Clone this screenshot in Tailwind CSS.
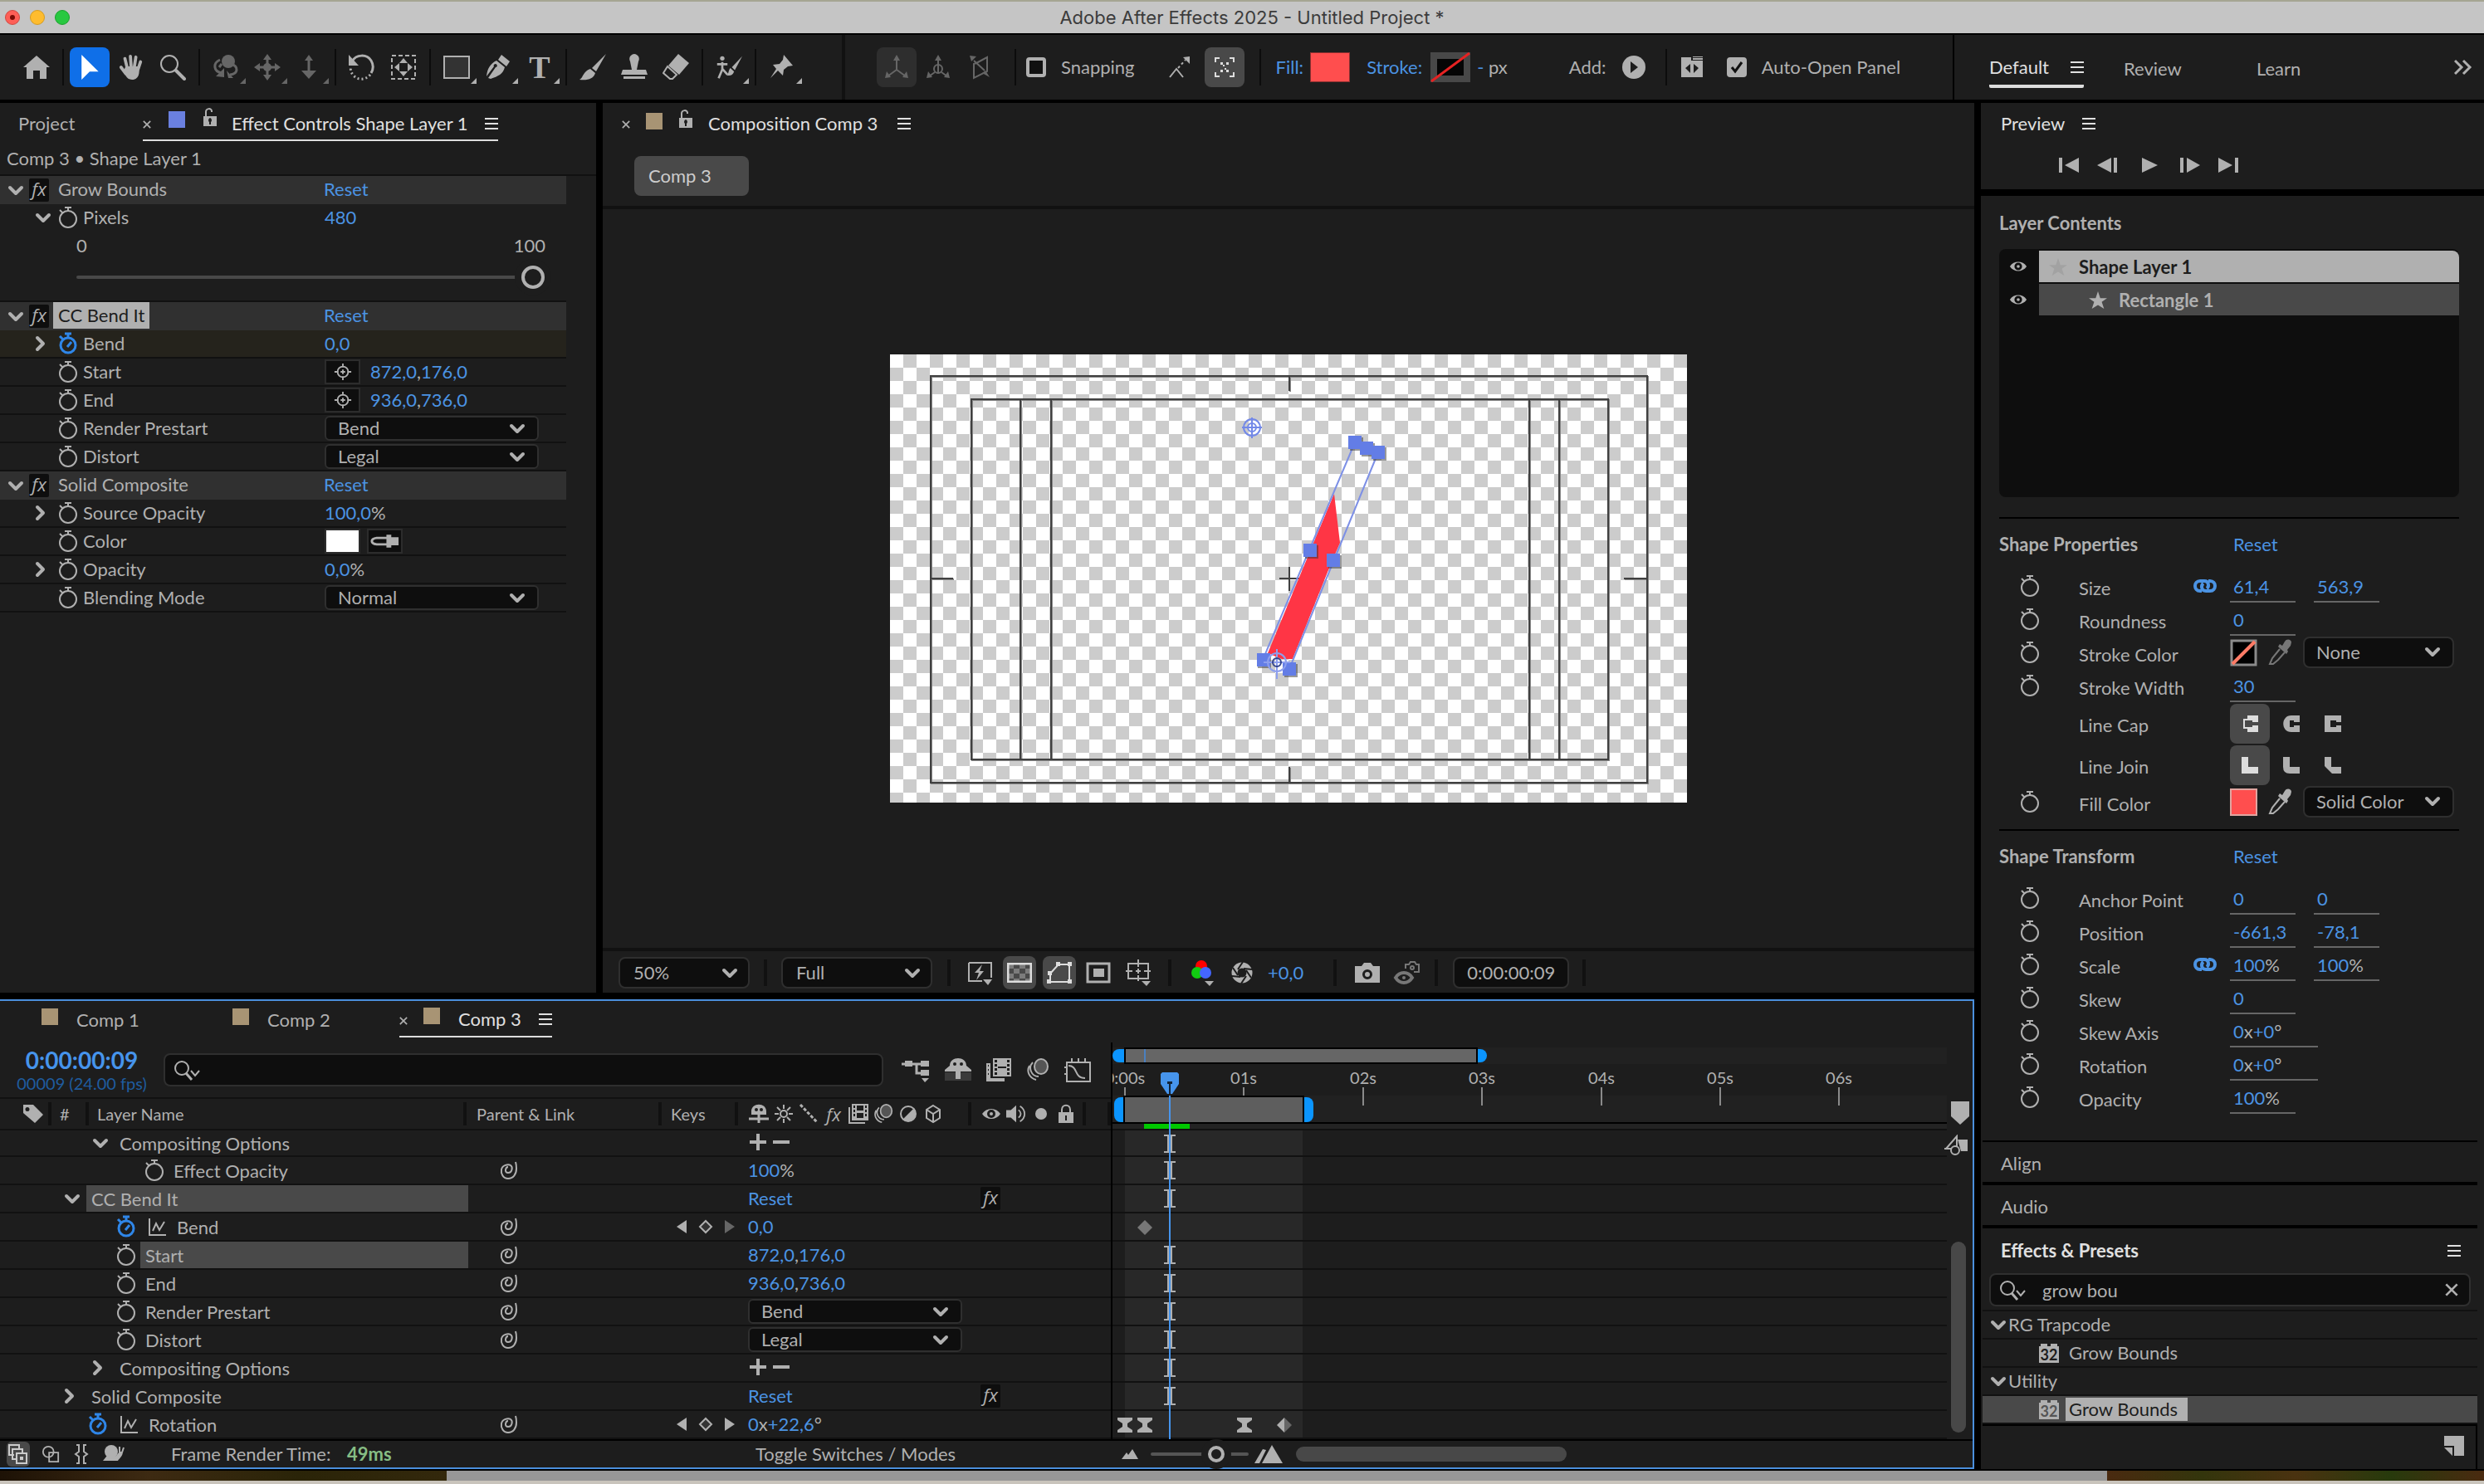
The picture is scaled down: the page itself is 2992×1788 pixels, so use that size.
<!DOCTYPE html>
<html lang="en">

<head>
  <meta charset="UTF-8">
  <meta name="viewport" content="width=device-width, initial-scale=1.0">
  <title>Adobe After Effects 2025 - Untitled Project *</title>
  <script src="https://cdn.jsdelivr.net/npm/@tailwindcss/browser@4"></script>
</head>

<body class="min-h-screen flex flex-col bg-black text-[#b0b0b0] text-[22px] leading-7 font-['Lato','Noto_Sans',sans-serif] [&_use]:stroke-current [&_use]:stroke-2">

  <!-- Icon sprite -->
  <svg class="hidden">
    <symbol id="home" viewBox="0 0 32 32"><path fill="currentColor" stroke="none" d="M16 2 0 16h4v14h8V20h8v10h8V16h4z"/></symbol>
    <symbol id="arrow" viewBox="0 0 32 36"><path fill="currentColor" stroke="none" d="M5 1 28 24H16L5 35z"/></symbol>
    <symbol id="hand" viewBox="0 0 32 34"><path fill="none" stroke-width="4" stroke-linecap="round" d="M11 18 8 6M16 17 15 3M20 17l2-13M25 19l3-9M9 25 3 17"/><path fill="currentColor" stroke="none" d="M9 16h18l-1 9c-1 5-4 8-9 8-4 0-6-2-8-5l-3-6z"/></symbol>
    <symbol id="zoom" viewBox="0 0 32 32"><circle cx="12" cy="12" r="10" fill="none"/><path stroke-width="4" stroke-linecap="round" d="m20 20 10 10"/></symbol>
    <symbol id="orbit" viewBox="0 0 32 32"><circle cx="19" cy="9" r="8" fill="currentColor" stroke="none"/><path fill="none" stroke-width="3" d="M9 7c-9 4-8 14 2 16M22 12c10 3 9 12-1 13M11 12l-3 4"/><path fill="currentColor" stroke="none" d="M14 17v11L4 27zM17 20l8 9h-6z"/></symbol>
    <symbol id="pan" viewBox="0 0 32 32"><circle cx="16" cy="16" r="5" fill="currentColor" stroke="none"/><path stroke-width="3" d="M16 5v22M5 16h22"/><path fill="currentColor" stroke="none" d="m16 0 5 7H11zM16 32l5-7H11zM0 16l7-5v10zM32 16l-7-5v10z"/></symbol>
    <symbol id="dolly" viewBox="0 0 32 32"><path stroke-width="3" d="M16 6v16"/><path fill="currentColor" stroke="none" d="m16 1 5 7H11zM16 30l9-10H7z"/></symbol>
    <symbol id="rotate" viewBox="0 0 32 32"><path fill="none" stroke-width="3" d="M4 9c5-9 18-9 23-1 3 5 3 10 0 15"/><path fill="none" stroke-width="3" stroke-dasharray="2 3" d="M26 25c-6 7-16 7-21 0-3-4-3-7-2-10"/><path fill="currentColor" stroke="none" d="M0 1v13h12z"/></symbol>
    <symbol id="panbehind" viewBox="0 0 32 32"><path fill="none" stroke-dasharray="5 3" d="M2 2h28v28H2z"/><path fill="currentColor" stroke="none" d="m16 5 5 6H11zM16 27l5-6H11zM5 16l6-5v10zM27 16l-6-5v10z"/></symbol>
    <symbol id="rect" viewBox="0 0 32 32"><path fill="#333" d="M1 3h30v26H1z"/></symbol>
    <symbol id="pen" viewBox="0 0 32 32"><path fill="currentColor" stroke="none" d="m20 1 10 8-4 6-10-8zM14 8l10 8c-2 8-8 11-17 14l-3-1 9-13a2 2 0 1 0-2-1L2 27C3 18 6 12 14 8z"/></symbol>
    <symbol id="brush" viewBox="0 0 32 32"><path fill="currentColor" stroke="none" d="M32 0 20 21l-5-4zM13 18l6 5c-2 7-9 9-19 8 5-3 4-10 13-13z"/></symbol>
    <symbol id="stamp" viewBox="0 0 32 32"><path fill="currentColor" stroke="none" d="M16 0a6 6 0 0 1 5 9l-2 10h11l2 6H0l2-6h11L11 9a6 6 0 0 1 5-9zM3 27h26v3H3z"/></symbol>
    <symbol id="eraser" viewBox="0 0 32 32"><path fill="currentColor" stroke="none" d="M19 0 32 11 20 25 7 14z"/><path fill="none" d="m6 15 11 10-5 5H9l-8-7z"/></symbol>
    <symbol id="roto" viewBox="0 0 36 32"><circle cx="9" cy="4" r="3" fill="currentColor" stroke="none"/><path fill="none" stroke-width="3" d="M2 12h14M9 9v10l-5 12M9 18l7 8"/><path fill="currentColor" stroke="none" d="M36 1 26 20l-4-4zM20 17l5 5c-2 5-5 6-10 5 3-2 2-7 5-10z"/></symbol>
    <symbol id="pin" viewBox="0 0 32 32"><path fill="currentColor" stroke="none" d="m18 1 11 13-6 1-5 4-1 7-6-6-9 9 7-11-4-5 8-1 4-5z"/></symbol>
    <symbol id="axis1" viewBox="0 0 32 32"><path fill="none" d="M16 5v14M16 19 5 27M16 19l11 8"/><path fill="currentColor" stroke="none" d="m16 1 4 7h-8zM2 29l2-8 5 7zM30 29l-2-8-5 7z"/></symbol>
    <symbol id="axis2" viewBox="0 0 32 32"><circle cx="16" cy="18" r="5" fill="none"/><path fill="none" d="M16 5v18M12 22l-7 5M20 22l7 5"/><path fill="currentColor" stroke="none" d="m16 1 4 7h-8zM2 29l2-8 5 7zM30 29l-2-8-5 7z"/></symbol>
    <symbol id="axis3" viewBox="0 0 32 32"><path fill="none" d="M9 12v17l16-8V4L12 11zM9 8l13 12"/><path fill="currentColor" stroke="none" d="m4 2 8 1-6 6zM28 28l-9-5 4-3z"/></symbol>
    <symbol id="snap" viewBox="0 0 32 32"><path fill="none" d="m4 28 8-10 8 10"/><path fill="none" stroke-dasharray="3 3" d="m14 17 9-10"/><path fill="currentColor" stroke="none" d="M28 3v9l-8-8z"/></symbol>
    <symbol id="snapbox" viewBox="0 0 32 32"><path fill="none" d="M10 5H5v5M22 5h5v5M10 27H5v-5M22 27h5v-5"/><path fill="currentColor" stroke="none" d="M11 10h3v3h-3zM18 10h3v3h-3zM11 19h3v3h-3zM18 19h3v3h-3zM14 13h2v2h-2zM16 17h2v2h-2z"/></symbol>
    <symbol id="panelopen" viewBox="0 0 28 28"><path fill="currentColor" stroke="none" fill-rule="evenodd" d="M1 2h12v4h14v20H1zM12 10l-6 5 6 6zM16 10v11l6-6zM15 1h12v1H15zM15 3h12v2H15z"/></symbol>
    <symbol id="menu" viewBox="0 0 16 16"><path d="M0 2h16M0 8h16M0 14h16"/></symbol>
    <symbol id="lock" viewBox="0 0 16 24"><path fill="none" d="M3 11V5c0-5 7-5 7-1v1"/><path fill="currentColor" stroke="none" fill-rule="evenodd" d="M0 10h16v12H0zM8 12a3 3 0 0 0-1 5v3h2v-3a3 3 0 0 0-1-5z"/></symbol>
    <symbol id="padlock" viewBox="0 0 18 24"><path fill="none" d="M4 11V7c0-7 10-7 10 0v4"/><path fill="currentColor" stroke="none" fill-rule="evenodd" d="M0 10h18v13H0zM8 14v6h2v-6z"/></symbol>
    <symbol id="down" viewBox="0 0 24 24"><path fill="none" stroke-width="4" stroke-linecap="round" stroke-linejoin="round" d="m5 9 7 7 7-7"/></symbol>
    <symbol id="right" viewBox="0 0 24 24"><path fill="none" stroke-width="4" stroke-linecap="round" stroke-linejoin="round" d="m5 5 7 7-7 7"/></symbol>
    <symbol id="watch" viewBox="0 0 24 28"><circle cx="12" cy="16" r="10" fill="none"/><path d="M12 2v4M8 2h8M2 5l4 4"/></symbol>
    <symbol id="watchon" viewBox="0 0 24 28"><circle cx="12" cy="16" r="9" fill="none" stroke-width="3"/><path stroke-width="3" d="M12 2v4M8 2h8M2 5l4 4M11 18l5-6"/></symbol>
    <symbol id="graph" viewBox="0 0 24 24"><path fill="none" d="M2 2v20h20M6 17 10 8l4 8 6-10"/></symbol>
    <symbol id="whip" viewBox="0 0 24 24"><path fill="none" d="M12 8c-3 0-5 7 0 7s6-7 3-9-10 0-11 5 2 11 8 11 10-5 10-12c0-3 0-5-1-8"/></symbol>
    <symbol id="target" viewBox="0 0 24 24"><circle cx="12" cy="12" r="7" fill="none"/><path d="M12 1v5M12 18v5M1 12h5M18 12h5M12 9v6M9 12h6"/></symbol>
    <symbol id="dropper" viewBox="0 0 28 32"><path fill="currentColor" stroke="none" d="M28 4c0-4-6-5-8-1l-3 5-3-2-2 3 2 2 8 7 2-3-1-2 4-5z"/><path fill="none" d="m14 12-9 11-3 7 4 0 6-5 8-9"/></symbol>
    <symbol id="dropperflat" viewBox="0 0 40 20"><path fill="none" stroke-width="3" d="M24 6H10c-8 1-8 7 0 8h14"/><path fill="currentColor" stroke="none" d="M22 2h6v3h9v10h-9v3h-6z"/></symbol>
    <symbol id="chain" viewBox="0 0 28 18"><path fill="none" stroke-width="4" d="M10 15H8C0 15 0 3 8 3h5c6 0 6 7 3 9M18 3h2c8 0 8 12 0 12h-5c-6 0-6-7-3-9"/></symbol>
    <symbol id="star" viewBox="0 0 24 24"><path fill="currentColor" stroke="none" d="m12 0 3 9h9l-7 5 3 9-8-5-8 5 3-9-7-5h9z"/></symbol>
    <symbol id="eye" viewBox="0 0 24 18"><path fill="currentColor" stroke="none" fill-rule="evenodd" d="M1 9C6 1 18 1 23 9 18 17 6 17 1 9zM12 4a5 5 0 1 0 0 10 5 5 0 0 0 0-10z"/><circle cx="12" cy="9" r="2" fill="currentColor" stroke="none"/></symbol>
    <symbol id="search" viewBox="0 0 32 26"><circle cx="10" cy="10" r="8" fill="none"/><path fill="none" stroke-width="3" d="m15 16 7 8"/><path fill="none" d="m21 13 5 6 5-6"/></symbol>
    <symbol id="close" viewBox="0 0 12 12"><path d="m1 1 10 10M11 1 1 11"/></symbol>
    <symbol id="plusminus" viewBox="0 0 50 24"><path stroke-width="4" d="M2 11h20M12 1v20M30 11h20"/></symbol>
    <symbol id="shy" viewBox="0 0 24 24"><path fill="currentColor" stroke="none" fill-rule="evenodd" d="M3 13V9c0-11 18-11 18 0v4zM9 5a2 2 0 1 0 0 4 2 2 0 0 0 0-4zM15 5a2 2 0 1 0 0 4 2 2 0 0 0 0-4z"/><path stroke-width="3" d="M0 18h24M12 12v11"/></symbol>
    <symbol id="shylg" viewBox="0 0 32 30"><path fill="#3a3a3a" stroke="none" d="M0 18h32v10H0z"/><path fill="currentColor" stroke="none" fill-rule="evenodd" d="M6 10c0-12 20-12 20 0l6 5v2H0v-2zM12 6a2 2 0 1 0 0 4 2 2 0 0 0 0-4zM20 6a2 2 0 1 0 0 4 2 2 0 0 0 0-4z"/><path stroke-width="6" d="M16 14v12"/></symbol>
    <symbol id="sun" viewBox="0 0 24 24"><circle cx="12" cy="12" r="4" fill="none"/><path d="M12 1v5M12 18v5M1 12h5M18 12h5M4 4l4 4M16 16l4 4M20 4l-4 4M8 16l-4 4"/></symbol>
    <symbol id="quality" viewBox="0 0 24 24"><path stroke-width="3" stroke-dasharray="4 2" d="m2 1 20 21"/></symbol>
    <symbol id="film" viewBox="0 0 24 24"><path fill="currentColor" stroke="none" fill-rule="evenodd" d="M4 0h20v20H4zM6 2v3h2V2zM6 7v3h2V7zM6 12v3h2v-3zM20 2v3h2V2zM20 7v3h2V7zM20 12v3h2v-3zM10 2v6h8V2zM10 11v6h8v-6zM0 4h2v18h18v2H0z"/></symbol>
    <symbol id="blur" viewBox="0 0 28 28"><ellipse cx="18" cy="10" rx="8" ry="9" fill="#555"/><path fill="none" d="M8 5c-6 6-2 17 7 17M4 9c-4 7 0 15 8 17"/></symbol>
    <symbol id="adjust" viewBox="0 0 24 24"><circle cx="12" cy="12" r="9" fill="none"/><path fill="currentColor" stroke="none" d="M19 5A10 10 0 0 1 5 19z"/></symbol>
    <symbol id="cube" viewBox="0 0 24 24"><path fill="none" d="m12 2 8 5v10l-8 5-8-5V7zM4 7l8 5 8-5M12 12v10"/></symbol>
    <symbol id="speaker" viewBox="0 0 26 24"><path fill="currentColor" stroke="none" d="M0 7h6l7-6v22l-7-6H0z"/><path fill="none" d="M16 7c4 3 4 7 0 10M18 2c8 5 8 15 0 20"/></symbol>
    <symbol id="dot" viewBox="0 0 24 24"><circle cx="12" cy="12" r="7" fill="currentColor" stroke="none"/></symbol>
    <symbol id="tag" viewBox="0 0 28 24"><path fill="currentColor" stroke="none" fill-rule="evenodd" d="M2 1h12l12 12-10 10L2 11zM7 4a2 2 0 1 0 0 5 2 2 0 0 0 0-5z"/></symbol>
    <symbol id="flow" viewBox="0 0 34 30"><path fill="currentColor" stroke="none" d="M4 4h9v7H4zM23 4h10v7H23zM23 15h10v7H23zM24 25h9l-5 5z"/><path fill="none" stroke-width="3" d="M0 8h23M18 8v11h6"/></symbol>
    <symbol id="filmlg" viewBox="0 0 30 30"><path fill="currentColor" stroke="none" fill-rule="evenodd" d="M8 1h22v22H8zM10 3v3h3V3zM10 8v3h3V8zM10 13v3h3v-3zM10 18v3h3v-3zM25 3v3h3V3zM25 8v3h3V8zM25 13v3h3v-3zM25 18v3h3v-3zM14 11v2h10v-2zM0 7h5v18h17v4H0zM2 9v2h1V9zM2 14v2h1v-2zM2 19v2h1v-2z"/></symbol>
    <symbol id="curve" viewBox="0 0 34 30"><path fill="none" d="M3 6h28v23H3zM9 1v5M17 1v5M25 1v5M0 12h3M0 20h3M5 10c12 0 6 15 20 15"/></symbol>
    <symbol id="fast" viewBox="0 0 30 32"><path fill="none" d="M1 4h27v18M1 4v22h16"/><path fill="currentColor" stroke="none" d="m17 6-9 10h5l-3 9 9-11h-5zM18 24h11l-5 7z"/></symbol>
    <symbol id="grid" viewBox="0 0 30 24"><path fill="currentColor" fill-opacity=".35" stroke="none" d="M1 1h7v6H1zM15 1h7v6h-7zM8 7h7v6H8zM22 7h7v6h-7zM1 13h7v6H1zM15 13h7v6h-7zM8 19h7v4H8zM22 19h7v4h-7z"/><path fill="none" stroke-width="3" d="M1 1h28v22H1z"/></symbol>
    <symbol id="mask" viewBox="0 0 30 26"><path fill="none" d="M14 3h13v21H4V14z"/><path fill="currentColor" stroke="none" d="M11 0h5v5h-5zM25 0h5v5h-5zM25 21h5v5h-5zM0 21h5v5H0zM1 11h5v5H1z"/></symbol>
    <symbol id="roi" viewBox="0 0 30 26"><path fill="none" stroke-width="3" d="M2 2h26v22H2z"/><path fill="currentColor" stroke="none" d="M9 8h13v10H9z"/></symbol>
    <symbol id="guides" viewBox="0 0 30 32"><path fill="none" d="M3 5h24v18H3zM15 0v9M15 19v7M0 14h8M22 14h8M12 14h6M15 11v6"/><path fill="currentColor" stroke="none" d="M19 26h11l-5 6z"/></symbol>
    <symbol id="rgb" viewBox="0 0 28 32"><g stroke="none"><circle cx="12" cy="8" r="7" fill="#f00"/><circle cx="7" cy="16" r="7" fill="#1c1"/><circle cx="17" cy="16" r="7" fill="#46f"/><path fill="currentColor" d="M16 26h11l-5 6z"/></g></symbol>
    <symbol id="aperture" viewBox="0 0 26 26"><circle cx="13" cy="13" r="9" fill="none" stroke-width="7"/><path stroke="#1d1d1d" d="m14 0-6 9M25 9l-10-1M24 19l-6-9M12 26l6-9M1 17l10 1M2 7l6 9"/></symbol>
    <symbol id="camera" viewBox="0 0 30 24"><path fill="currentColor" stroke="none" fill-rule="evenodd" d="M0 4h8l3-4h8l3 4h8v20H0zM15 8a6 6 0 1 0 0 12 6 6 0 0 0 0-12z"/><circle cx="15" cy="14" r="3" fill="currentColor" stroke="none"/></symbol>
    <symbol id="showsnap" viewBox="0 0 32 28"><path fill="none" stroke-width="4" d="M3 20c5-8 15-8 20 0-5 8-15 8-20 0z"/><circle cx="13" cy="20" r="2" fill="currentColor" stroke="none"/><path fill="none" d="M15 9V4h4l2-3h5l2 3h3v9h-6"/><circle cx="23" cy="8" r="2" fill="none"/></symbol>
    <symbol id="layers" viewBox="0 0 24 24"><path fill="none" d="M7 13H1V1h12v4M10 18H5V6h12v4"/><path fill="none" d="M10 11h12v12H10z"/><path fill="currentColor" stroke="none" d="M14 15h4v4h-4z"/></symbol>
    <symbol id="modes" viewBox="0 0 24 24"><circle cx="9" cy="9" r="7" fill="none"/><path fill="none" d="M10 10h12v12H10z"/></symbol>
    <symbol id="braces" viewBox="0 0 24 24"><path fill="none" d="M6 1h3v8l-4 3 4 3v8H6M18 1h-3v8l4 3-4 3v8h3"/></symbol>
    <symbol id="snail" viewBox="0 0 26 24"><circle cx="10" cy="9" r="8" fill="currentColor" stroke="none"/><path fill="currentColor" stroke="none" d="M4 15h11l5-6h4c0 5-4 8-6 11H0z"/><path d="M20 10V3M23 10l2-6"/></symbol>
    <symbol id="mount" viewBox="0 0 34 22"><path fill="currentColor" stroke="none" d="M0 22 10 5l4 1-8 16zM9 22 21 0l13 22z"/></symbol>
    <symbol id="smallmount" viewBox="0 0 20 12"><path fill="currentColor" stroke="none" d="m0 12 6-8 2 3 5-7 7 12z"/></symbol>
    <symbol id="marker" viewBox="0 0 22 28"><path fill="currentColor" stroke="none" d="M0 0h22v18L11 28 0 18z"/></symbol>
    <symbol id="compbutton" viewBox="0 0 30 26"><path fill="none" d="m2 17 13-15v12M0 17h9"/><path fill="currentColor" stroke="none" d="M16 6h12v14h-8z"/><circle cx="13" cy="19" r="5" fill="#1d1d1d"/></symbol>
    <symbol id="newbin" viewBox="0 0 24 24"><path fill="currentColor" stroke="none" d="M0 0h24v24H12V12H0zM0 14h10v10z"/></symbol>
    <symbol id="brick" viewBox="0 0 24 24"><path fill="currentColor" stroke="none" d="M0 4h2V1h8v3h4V1h8v3h2v20H0z"/></symbol>
    <symbol id="kleft" viewBox="0 0 16 18"><path fill="currentColor" stroke="none" d="M14 1v16L2 9z"/></symbol>
    <symbol id="kright" viewBox="0 0 16 18"><path fill="currentColor" stroke="none" d="M2 1v16l12-8z"/></symbol>
    <symbol id="kadd" viewBox="0 0 18 18"><path fill="#333" d="m9 2 7 7-7 7-7-7z"/></symbol>
    <symbol id="diamond" viewBox="0 0 18 18"><path fill="currentColor" stroke="none" d="m9 0 9 9-9 9-9-9z"/></symbol>
    <symbol id="halfdiamond" viewBox="0 0 18 18"><path fill="#666" stroke="none" d="m9 0 9 9-9 9z"/><path fill="currentColor" stroke="none" d="M9 0v18L0 9z"/></symbol>
    <symbol id="hourglass" viewBox="0 0 18 18"><path fill="currentColor" stroke="none" d="M0 0h18v3l-6 4v4l6 4v3H0v-3l6-4V7L0 3z"/></symbol>
    <symbol id="ibeam" viewBox="0 0 14 22"><path fill="none" d="M0 1h14M0 21h14M5 1v20M9 1v20"/></symbol>
    <symbol id="playhead" viewBox="0 0 22 26"><path fill="#4694ec" stroke="none" d="M2 0h18l2 2v12l-8 12H8L0 14V2z"/><path stroke="#12253a" d="M11 12v14"/><path fill="#12253a" stroke="none" d="M8 11h6v3H8z"/></symbol>
  </svg>

  <!-- Window title bar -->
  <header class="border-t-2 border-t-[#a5a592] border-b-2 border-b-black bg-[#c5c5c5] h-[42px] flex items-center px-[6px] text-[#3c3c3c]">
    <div class="flex gap-3">
      <button aria-label="Close" class="size-[18px] rounded-full bg-[#fe5f57] border border-[#d14840] flex items-center justify-center"><span class="size-[6px] rounded-full bg-[#7a0c06]"></span></button>
      <button aria-label="Minimise" class="size-[18px] rounded-full bg-[#febc2e] border border-[#d59c20]"></button>
      <button aria-label="Zoom" class="size-[18px] rounded-full bg-[#28c840] border border-[#1aa12c]"></button>
    </div>
    <h1 class="flex-1 text-center pr-[54px] font-['Inter','Roboto',sans-serif]">Adobe After Effects 2025 - Untitled Project *</h1>
  </header>

  <!-- Tool bar -->
  <div class="h-[78px] flex bg-[#1d1d1d]">
    <div class="w-[1018px] shrink-0 flex items-center gap-[2px] pl-5 border-r-4 border-[#111]" id="tools"></div>
    <div class="flex-1 flex items-center border-r-2 border-black pl-[38px]">
      <div class="flex items-center gap-[2px] text-[#666]">
        <button aria-label="Local axis" class="w-12 h-12 rounded-lg bg-[#2e2e2e] flex items-center justify-center"><svg class="size-8"><use href="#axis1"/></svg></button>
        <button aria-label="World axis" class="w-12 h-12 flex items-center justify-center"><svg class="size-8"><use href="#axis2"/></svg></button>
        <button aria-label="View axis" class="w-12 h-12 flex items-center justify-center"><svg class="size-8"><use href="#axis3"/></svg></button>
      </div>
      <span class="w-[2px] h-11 bg-[#0c0c0c] ml-[18px] mr-3"></span>
      <label class="flex items-center gap-[18px]"><input type="checkbox" class="appearance-none size-6 rounded border-4 border-[#b0b0b0] bg-[#111]">Snapping</label>
      <button aria-label="Snap edges" class="ml-[38px] size-8"><svg class="size-8"><use href="#snap"/></svg></button>
      <button aria-label="Snap features" class="ml-[14px] w-12 h-12 rounded-lg bg-[#494949] text-[#ddd] flex items-center justify-center"><svg class="size-8"><use href="#snapbox"/></svg></button>
      <span class="w-[2px] h-11 bg-[#0c0c0c] mx-[18px]"></span>
      <button class="text-[#4b93e3]">Fill:</button>
      <button aria-label="Fill colour" class="ml-2 w-12 h-9 bg-[#ff4e4e] border border-[#8c3030]"></button>
      <button class="ml-5 text-[#4b93e3]">Stroke:</button>
      <button aria-label="Stroke colour" class="ml-[10px] w-12 h-9"><svg class="w-12 h-9" viewBox="0 0 48 36"><path fill="#484848" d="M0 0h48v36H0z"/><path fill="#050505" d="M8 8h32v20H8z"/><path stroke="#e62222" stroke-width="3" d="M1 35 47 1"/></svg></button>
      <span class="ml-2"><span class="text-[#4b93e3]">-</span> px</span>
      <span class="ml-[74px]">Add:</span>
      <button aria-label="Add" class="ml-[19px] size-7"><svg class="size-7" viewBox="0 0 28 28"><circle cx="14" cy="14" r="14" fill="#b0b0b0"/><path fill="#1d1d1d" d="m10 7 9 7-9 7z"/></svg></button>
      <span class="w-[2px] h-11 bg-[#0c0c0c] ml-6 mr-4"></span>
      <button aria-label="Panels" class="size-7"><svg class="size-7"><use href="#panelopen"/></svg></button>
      <label class="ml-7 flex items-center gap-[18px] relative"><input type="checkbox" checked class="appearance-none size-6 rounded bg-[#b0b0b0]"><svg class="absolute left-1 top-[6px] size-4" viewBox="0 0 16 16"><path fill="none" stroke="#111" stroke-width="3" d="m2 8 4 5 8-11"/></svg>Auto-Open Panel</label>
    </div>
    <nav class="w-[638px] shrink-0 flex items-center pl-[42px] pr-[14px]">
      <a href="#" class="h-[46px] mt-1 border-b-4 border-[#ddd] rounded-xs text-[#e0e0e0] flex items-center gap-[26px]">Default<svg class="size-4"><use href="#menu"/></svg></a>
      <a href="#" class="ml-[48px] mt-1">Review</a>
      <a href="#" class="ml-[90px] mt-1">Learn</a>
      <button aria-label="More workspaces" class="ml-auto"><svg class="w-[22px] h-5" viewBox="0 0 22 20"><path fill="none" stroke="#b0b0b0" stroke-width="3" d="m1 2 8 8-8 8M11 2l8 8-8 8"/></svg></button>
    </nav>
  </div>

  <div class="flex-1 flex gap-2 mt-1">
    <div class="flex-1 min-w-0 flex flex-col gap-2">
      <div class="flex-1 flex gap-2">

        <!-- Effect controls -->
        <section class="w-[718px] shrink-0 bg-[#1d1d1d]">
          <div class="flex h-12 items-start pl-[22px]">
            <a href="#" class="h-12 flex items-center pt-[2px]">Project</a>
            <div class="ml-auto mr-[118px] h-[46px] w-[428px] border-b-2 border-[#ddd] flex items-center text-[#e0e0e0] whitespace-nowrap">
              <svg class="size-[10px] mt-2 text-[#b0b0b0]"><use href="#close"/></svg>
              <span class="ml-[21px] mb-1 size-5 bg-[#6a80e0]"></span>
              <svg class="ml-[22px] mb-2 w-4 h-6 text-[#b0b0b0]"><use href="#lock"/></svg>
              <a href="#" class="ml-[18px] mt-[6px]">Effect Controls Shape Layer 1</a>
              <svg class="ml-auto mt-[6px] size-4"><use href="#menu"/></svg>
            </div>
          </div>
          <p class="h-10 pl-2 flex items-center border-b-2 border-[#111]">Comp 3 • Shape Layer 1</p>
          <div id="effects" class="mr-9"></div>
        </section>

        <!-- Composition viewer -->
        <section class="flex-1 bg-[#1d1d1d] flex flex-col">
          <div class="h-16 pb-4 flex items-center pl-[23px] text-[#e0e0e0]">
            <svg class="size-[10px] mt-1 text-[#b0b0b0]"><use href="#close"/></svg>
            <span class="ml-[19px] mb-1 size-5 bg-[#a89474]"></span>
            <svg class="ml-[20px] mb-2 w-4 h-6 text-[#b0b0b0]"><use href="#lock"/></svg>
            <a href="#" class="ml-[19px] mt-[2px]">Composition Comp 3</a>
            <svg class="ml-6 mt-[2px] size-4"><use href="#menu"/></svg>
          </div>
          <div class="pl-[38px] pb-3 border-b-4 border-[#111]">
            <button class="h-12 w-[138px] rounded-lg bg-[#494949] text-left pl-[17px] text-[#ccc]">Comp 3</button>
          </div>
          <div class="flex-1 flex justify-center items-center">
            <svg class="w-[960px] h-[540px]" viewBox="0 0 960 540" fill="none" id="viewer">
              <defs><pattern id="checks" width="32" height="32" patternUnits="userSpaceOnUse"><path fill="#fff" d="M0 0h32v32H0z"/><path fill="#ccc" d="M16 0h16v16H16zM0 16h16v16H0z"/></pattern></defs>
              <path fill="url(#checks)" d="M0 0h960v540H0z"/>
              <g id="guidelines">
                <path stroke="#888" stroke-width="2" d="M50 27h863v490H50zM99 55h767v434H99zM158 55v434M195 55v434M771 55v434M807 55v434M482 27v18M482 498v18M50 271h27M885 271h27"/>
                <path stroke="#404040" stroke-width="2" d="M49 26h863v490H49zM98 54h767v434H98zM157 54v434M194 54v434M770 54v434M806 54v434M481 26v18M481 497v18M49 270h27M884 270h28M469 270h28M481 256v29"/>
              </g>
              <path fill="#ff3545" d="m535 168 7 59-10 23-47 117-13 0-17-7 56-135z"/>
              <path stroke="#7d90e6" stroke-width="2" d="M560 106 449 368M588 118 481 379"/>
              <g fill="#333" opacity=".5"><path d="M554 100h16v16h-16zM568 107h16v16h-16zM582 112h16v16h-16zM500 230h16v16h-16zM528 242h16v16h-16zM443 362h16v16h-16zM475 373h16v16h-16z"/></g>
              <path fill="#637de6" d="M552 98h16v16h-16zM566 105h16v16h-16zM580 110h16v16h-16zM498 228h16v16h-16zM526 240h16v16h-16zM442 360h16v16h-16zM473 371h16v16h-16z"/>
              <g stroke="#7288e8" stroke-width="2"><circle cx="436" cy="88" r="10"/><circle cx="436" cy="88" r="5"/><path d="M436 76v25M424 88h24"/></g>
              <g stroke="#8d9fee" stroke-width="2"><circle cx="466" cy="371" r="11"/><path d="M466 355v36M450 371h32"/><circle cx="466" cy="371" r="5" stroke="#33448c"/></g>
            </svg>
          </div>
          <div class="h-[54px] pt-[2px] border-t-4 border-[#111] flex items-center pl-[19px]">
            <div class="relative w-[158px]"><select aria-label="Magnification" class="block appearance-none w-full h-[38px] rounded-lg border-2 border-[#2f2f2f] bg-[#0e0e0e] pl-4"><option>50%</option></select><svg class="absolute right-3 top-[7px] size-6 pointer-events-none"><use href="#down"/></svg></div>
            <span class="w-1 h-8 bg-[#111] mx-[17px]"></span>
            <div class="relative w-[182px]"><select aria-label="Resolution" class="block appearance-none w-full h-[38px] rounded-lg border-2 border-[#2f2f2f] bg-[#0e0e0e] pl-4"><option>Full</option></select><svg class="absolute right-3 top-[7px] size-6 pointer-events-none"><use href="#down"/></svg></div>
            <span class="w-1 h-8 bg-[#111] ml-[18px] mr-[21px]"></span>
            <button aria-label="Fast previews"><svg class="w-[30px] h-8"><use href="#fast"/></svg></button>
            <button aria-label="Transparency grid" class="ml-3 w-10 h-10 rounded-lg bg-[#494949] text-[#ddd] flex items-center justify-center"><svg class="w-[30px] h-6"><use href="#grid"/></svg></button>
            <button aria-label="Mask visibility" class="ml-2 w-10 h-10 rounded-lg bg-[#494949] text-[#ddd] flex items-center justify-center"><svg class="w-[30px] h-[26px]"><use href="#mask"/></svg></button>
            <button aria-label="Region of interest" class="ml-3"><svg class="w-[30px] h-[26px]"><use href="#roi"/></svg></button>
            <button aria-label="Guides" class="ml-[18px]"><svg class="w-[30px] h-8"><use href="#guides"/></svg></button>
            <span class="w-1 h-8 bg-[#111] ml-[21px] mr-[24px]"></span>
            <button aria-label="Channels"><svg class="w-7 h-8"><use href="#rgb"/></svg></button>
            <button aria-label="Reset exposure" class="ml-5"><svg class="size-[26px]"><use href="#aperture"/></svg></button>
            <button class="ml-[18px] text-[#4b93e3]">+0,0</button>
            <span class="w-1 h-8 bg-[#111] ml-9 mr-[22px]"></span>
            <button aria-label="Take snapshot"><svg class="w-[30px] h-6"><use href="#camera"/></svg></button>
            <button aria-label="Show snapshot" class="ml-4 text-[#777]"><svg class="w-8 h-7"><use href="#showsnap"/></svg></button>
            <span class="w-1 h-8 bg-[#111] mx-[18px]"></span>
            <button class="h-[38px] w-[140px] rounded-lg border-2 border-[#2f2f2f] bg-[#0e0e0e]">0:00:00:09</button>
            <span class="w-1 h-8 bg-[#111] ml-4"></span>
          </div>
        </section>
      </div>

      <!-- Timeline -->
      <section class="bg-[#1d1d1d] border-2 border-l-0 border-[#4b8fdc]">
        <div class="h-[50px] flex items-start pl-[50px]">
          <a href="#" class="w-[230px] h-[44px] pt-[2px] flex items-center gap-[22px]"><span class="mb-2 size-5 bg-[#a89474]"></span>Comp 1</a>
          <a href="#" class="w-[201px] h-[44px] pt-[2px] flex items-center gap-[22px]"><span class="mb-2 size-5 bg-[#a89474]"></span>Comp 2</a>
          <div class="w-[184px] h-[44px] pt-[2px] flex items-center border-b-2 border-[#ddd] text-[#e0e0e0]">
            <svg class="size-[10px] mt-1 text-[#b0b0b0]"><use href="#close"/></svg>
            <a href="#" class="ml-[19px] flex items-center gap-[22px]"><span class="mb-2 size-5 bg-[#a89474]"></span>Comp 3</a>
            <svg class="ml-auto size-4"><use href="#menu"/></svg>
          </div>
        </div>

        <div class="flex">
          <div class="w-[1338px] shrink-0">
            <div class="h-[66px] flex items-center">
              <div class="w-[197px] text-center text-[#4694ec]">
                <p class="text-[28px] leading-8 font-bold">0:00:00:09</p>
                <p class="text-[20px] leading-6 text-[#1f5c9f]">00009 (24.00 fps)</p>
              </div>
              <div class="relative w-[867px]">
                <svg class="absolute left-3 top-2 w-8 h-[26px]"><use href="#search"/></svg>
                <input type="text" aria-label="Search layers" class="block w-full h-10 rounded-lg border-2 border-[#2f2f2f] bg-[#0e0e0e] pl-14">
              </div>
              <div class="flex items-center pl-[22px] gap-[18px]">
                <button aria-label="Mini-flowchart"><svg class="w-[34px] h-[30px]"><use href="#flow"/></svg></button>
                <button aria-label="Hide shy layers"><svg class="w-8 h-[30px]"><use href="#shylg"/></svg></button>
                <button aria-label="Frame blending"><svg class="size-[30px]"><use href="#filmlg"/></svg></button>
                <button aria-label="Motion blur"><svg class="size-7"><use href="#blur"/></svg></button>
                <button aria-label="Graph editor"><svg class="w-[34px] h-[30px]"><use href="#curve"/></svg></button>
              </div>
            </div>
            <div class="h-10 border-y-2 border-[#111] grid grid-cols-[62px_45px_455px_235px_92px_281px_138px_30px] text-[20px] [&>div]:flex [&>div]:items-center [&>div]:border-r-4 [&>div]:border-[#111] [&>div]:my-1">
              <div class="pl-[26px]"><svg class="w-7 h-6"><use href="#tag"/></svg></div>
              <div class="pl-[10px]">#</div>
              <div class="pl-[10px]">Layer Name</div>
              <div class="pl-3">Parent &amp; Link</div>
              <div class="pl-[11px]">Keys</div>
              <div class="pl-[13px] gap-[6px]" id="switches"></div>
              <div class="pl-3 gap-[6px]">
                <svg class="w-6 h-[18px]"><use href="#eye"/></svg><svg class="size-6"><use href="#speaker"/></svg><svg class="size-6"><use href="#dot"/></svg><svg class="ml-[3px] w-[18px] h-6"><use href="#padlock"/></svg>
              </div>
              <div></div>
            </div>
            <div id="layers-list"></div>
          </div>

          <!-- Time ruler and tracks -->
          <div class="flex-1 flex flex-col border-l-2 border-black">
            <div class="mt-[6px] h-5 flex bg-[#212121]">
              <span class="w-[14px] py-[2px]"><span class="block h-4 rounded-l-lg bg-[#0b95ff]"></span></span>
              <span class="w-[426px] bg-[#666] border-2 border-black pl-[22px]"><span class="block w-[2px] h-full bg-[#4b80c0]"></span></span>
              <span class="w-[11px] py-[2px]"><span class="block h-4 rounded-r-lg bg-[#0b95ff]"></span></span>
            </div>
            <div class="h-[38px] relative overflow-hidden text-[20px]" id="ruler"></div>
            <div class="h-[34px] relative bg-[#212121] border-b-2 border-black flex" id="work">
              <span class="w-[13px] pl-[2px] pt-[2px]"><span class="block h-full rounded-l-lg bg-[#0b95ff]"></span></span>
              <span class="z-10 w-[218px] bg-[#5e5e5e] border-x-2 border-t-2 border-black"></span>
              <span class="w-[11px] pt-[2px]"><span class="block h-full rounded-r-lg bg-[#0b95ff]"></span></span>
            </div>
            <div class="h-2 border-b-2 border-[#111] bg-[#232323] pl-[38px]"><span class="block w-[55px] h-[6px] bg-[#00c800]"></span></div>
            <div class="relative flex-1" id="tracks">
              <div class="absolute left-[15px] top-0 w-[214px] h-full bg-white/5"></div>
            </div>
          </div>
          <div class="w-[31px] shrink-0 flex flex-col pl-[5px] pt-[71px] pb-2">
            <svg class="w-[22px] h-7"><use href="#marker"/></svg>
            <svg class="-ml-2 mt-3 w-[30px] h-[26px]"><use href="#compbutton"/></svg>
            <span class="mt-[103px] w-[18px] flex-1 rounded-full bg-[#484848]"></span>
          </div>
        </div>

        <div class="h-[34px] border-t-2 border-black flex items-center">
          <div class="w-[1338px] shrink-0 flex items-center">
            <button aria-label="Layer switches" class="ml-2 w-7 h-[30px] rounded-md bg-[#494949] flex items-center justify-center text-[#ccc]"><svg class="size-6"><use href="#layers"/></svg></button>
            <button aria-label="Transfer controls" class="ml-[14px]"><svg class="size-[22px]"><use href="#modes"/></svg></button>
            <button aria-label="In and out" class="ml-[14px]"><svg class="size-6"><use href="#braces"/></svg></button>
            <button aria-label="Render time" class="ml-[14px]"><svg class="w-[26px] h-6"><use href="#snail"/></svg></button>
            <p class="ml-[56px] w-[704px]">Frame Render Time: <b class="ml-[14px] text-[#86bd84]">49ms</b></p>
            <button>Toggle Switches / Modes</button>
          </div>
          <svg class="ml-[13px] w-5 h-3"><use href="#smallmount"/></svg>
          <input type="range" min="0" max="100" value="70" aria-label="Timeline zoom" class="mx-[15px] w-[118px] appearance-none bg-transparent [&::-webkit-slider-runnable-track]:h-1 [&::-webkit-slider-runnable-track]:rounded [&::-webkit-slider-runnable-track]:bg-[#555] [&::-webkit-slider-thumb]:appearance-none [&::-webkit-slider-thumb]:size-5 [&::-webkit-slider-thumb]:-mt-2 [&::-webkit-slider-thumb]:rounded-full [&::-webkit-slider-thumb]:border-4 [&::-webkit-slider-thumb]:border-[#b0b0b0] [&::-webkit-slider-thumb]:bg-[#1d1d1d] [&::-webkit-slider-thumb]:shadow-[0_0_0_8px_#1d1d1d]">
          <svg class="-ml-2 w-[34px] h-[22px]"><use href="#mount"/></svg>
          <span class="ml-4 w-[326px] h-[18px] rounded-full bg-[#484848]"></span>
        </div>
      </section>
    </div>

    <!-- Right column -->
    <aside class="w-[606px] shrink-0 flex flex-col">
      <section class="h-[104px] bg-[#1d1d1d]">
        <h2 class="h-[50px] pl-6 flex items-center gap-[21px] text-[#e0e0e0]">Preview<svg class="size-4"><use href="#menu"/></svg></h2>
        <div class="pl-[94px] pt-4 flex items-center gap-[22px]">
          <button aria-label="First frame"><svg class="w-6 h-[18px]" viewBox="0 0 24 18" fill="#b0b0b0"><path d="M0 0h4v18H0zM24 0v18L7 9z"/></svg></button>
          <button aria-label="Previous frame"><svg class="w-6 h-[18px]" viewBox="0 0 24 18" fill="#b0b0b0"><path d="M20 0h4v18h-4zM17 0v18L0 9z"/></svg></button>
          <button aria-label="Play" class="w-8 pl-2"><svg class="w-5 h-[18px]" viewBox="0 0 20 18" fill="#b0b0b0"><path d="M0 0v18l19-9z"/></svg></button>
          <button aria-label="Next frame"><svg class="w-6 h-[18px]" viewBox="0 0 24 18" fill="#b0b0b0"><path d="M0 0h4v18H0zM8 0v18l16-9z"/></svg></button>
          <button aria-label="Last frame"><svg class="w-6 h-[18px]" viewBox="0 0 24 18" fill="#b0b0b0"><path d="M20 0h4v18h-4zM0 0v18l17-9z"/></svg></button>
        </div>
      </section>

      <section class="mt-2 flex-1 bg-[#1d1d1d] pl-[22px] pr-[30px]">
        <h2 class="h-16 pt-[2px] flex items-center font-bold">Layer Contents</h2>
        <ul class="h-[299px] rounded-lg bg-[#0e0e0e] pt-[2px]">
          <li class="h-10 flex pb-[2px]"><span class="w-12 flex items-center pl-[12px]"><svg class="w-[22px] h-[18px]"><use href="#eye"/></svg></span><span class="flex-1 rounded-tr-lg bg-[#b0b0b0] text-[#1d1d1d] font-bold flex items-center pt-[2px] pl-3 gap-[14px]"><svg class="size-[22px] text-[#a2a2a2]"><use href="#star"/></svg>Shape Layer 1</span></li>
          <li class="h-10 flex pb-[2px]"><span class="w-12 flex items-center pl-[12px]"><svg class="w-[22px] h-[18px]"><use href="#eye"/></svg></span><span class="flex-1 bg-[#494949] font-bold flex items-center pt-[2px] pl-[60px] gap-[14px]"><svg class="size-[22px]"><use href="#star"/></svg>Rectangle 1</span></li>
        </ul>
        <div id="properties" class="mt-6"></div>
      </section>

      <section class="bg-[#1d1d1d] pl-[2px] pr-2">
        <h2 class="h-[50px] border-t-2 border-black pl-[22px] pt-1 flex items-center">Align</h2>
        <h2 class="h-[52px] border-t-4 border-black pl-[22px] pt-1 flex items-center">Audio</h2>
        <h2 class="h-[58px] border-t-4 border-black pl-[22px] pr-5 flex items-center justify-between text-[#e0e0e0] font-bold">Effects &amp; Presets<svg class="size-4"><use href="#menu"/></svg></h2>
        <div class="relative mx-2">
          <svg class="absolute left-3 top-2 w-8 h-[26px]"><use href="#search"/></svg>
          <input type="text" aria-label="Search effects" value="grow bou" class="block w-full h-10 rounded-lg border-2 border-[#2f2f2f] bg-[#0e0e0e] pl-[62px]">
          <button aria-label="Clear search" class="absolute right-[15px] top-3 size-4"><svg class="size-4"><use href="#close"/></svg></button>
        </div>
        <ul class="mt-1 border-t-2 border-[#111] [&>li]:h-[34px] [&>li]:border-b-2 [&>li]:border-[#111] [&>li]:flex [&>li]:items-center">
          <li class="pl-[7px]"><svg class="size-6"><use href="#down"/></svg>RG Trapcode</li>
          <li class="pl-[68px]"><span class="relative w-6 h-6 mr-3"><svg class="size-6"><use href="#brick"/></svg><b class="absolute inset-0 pt-1 text-center text-[18px] leading-5 text-[#1d1d1d]">32</b></span>Grow Bounds</li>
          <li class="pl-[7px]"><svg class="size-6"><use href="#down"/></svg>Utility</li>
          <li class="pl-[68px] bg-[#494949]"><span class="relative w-6 h-6 mr-2"><svg class="size-6"><use href="#brick"/></svg><b class="absolute inset-0 pt-1 text-center text-[18px] leading-5 text-[#555]">32</b></span><span class="bg-[#b0b0b0] text-[#1d1d1d] pl-1 pr-3">Grow Bounds</span></li>
        </ul>
        <div class="h-[54px] border-t-2 border-r-2 border-black flex justify-end pr-[14px] pt-3"><button aria-label="New preset" class="size-6"><svg class="size-6"><use href="#newbin"/></svg></button></div>
      </section>
    </aside>
  </div>

  <!-- Desktop behind the window -->
  <div class="h-4 mt-[2px] flex border-b-4 border-[#c9c4bc]">
    <span class="w-[538px] bg-[linear-gradient(90deg,#1d1206,#3d2a12,#2a2408,#33280c)]"></span><span class="flex-1 bg-[#979797]"></span><span class="w-[454px] bg-[linear-gradient(90deg,#4a2a10,#33350c,#4a3210,#273a0c,#4a2a10)]"></span>
  </div>

  <script>
    const ic = (id, cls) => `<svg class="${cls}"><use href="#${id}"/></svg>`;
    const blue = (t) => `<span class="text-[#4b93e3]">${t}</span>`;
    const point = (a, b) => `${blue(a)},${blue(b)}`;
    const drop = (id, value) => `
      <div class="relative w-[258px]">
        <select id="${id}" class="block appearance-none w-full h-[30px] leading-6 rounded-md border-2 border-[#2f2f2f] bg-[#0e0e0e] pl-[14px]"><option>${value}</option></select>
        ${ic("down", "absolute right-[14px] top-[3px] size-6 pointer-events-none")}
      </div>`;
    const fx = `<span class="w-6 h-7 rounded-xs bg-[#0e0e0e] text-center italic leading-6 font-['Open_Sans',sans-serif]">fx</span>`;

    // Tools
    const tools = [
      ["home"], "|", ["arrow", "", "on"], ["hand"], ["zoom"], "|", ["orbit", "dim", "", 1], ["pan", "dim", "", 1], ["dolly", "dim", "", 1], "|",
      ["rotate"], ["panbehind"], "|", ["rect", "", "", 1], ["pen", "", "", 1], ["T", "", "", 1], "|", ["brush"], ["stamp"], ["eraser"], "|",
      ["roto", "", "", 1], "|", ["pin", "", "", 1],
    ];
    document.getElementById("tools").innerHTML = tools.map(t => {
      if (t === "|") return `<span class="w-3 flex justify-center"><span class="w-[2px] h-11 bg-[#0c0c0c]"></span></span>`;
      const [id, dim, on, more] = t;
      const face = id === "T" ? `<span class="text-[38px] leading-8 font-bold font-['Liberation_Serif',serif]">T</span>` : ic(id, "size-8");
      const tone = on ? "rounded-lg bg-[#0f6fe8] text-white" : dim ? "text-[#666]" : "";
      return `<button aria-label="${id}" class="relative w-12 h-12 flex items-center justify-center ${tone}">${face}${more ? `<svg class="absolute right-0 bottom-1 size-[7px]" viewBox="0 0 7 7"><path fill="currentColor" d="M7 0v7H0z"/></svg>` : ""}</button>`;
    }).join("");

    // Effect controls
    const cross = `<button aria-label="Pick point" class="w-[43px] h-[30px] border-2 border-[#2c2c2c] bg-[#0e0e0e] flex items-center justify-center">${ic("target", "size-[22px]")}</button>`;
    const head = (name, on) => `
      <div class="h-[34px] bg-[#303030] grid grid-cols-[390px_1fr] items-center">
        <div class="flex items-center h-full pl-[7px]">${ic("down", "size-6 mr-1")}${fx}<span class="ml-[5px] px-[6px] mb-[2px] ${on ? "leading-8 bg-[#b0b0b0] text-[#1d1d1d]" : ""}">${name}</span></div>
        <button class="text-left mb-[2px] text-[#4b93e3]">Reset</button>
      </div>`;
    const prop = (name, value, arrow, watch, id) => `
      <div class="h-[34px] border-b-2 border-[#111] grid grid-cols-[391px_1fr] items-center ${watch ? "bg-[#25231c]" : ""}">
        <div class="flex items-center pl-10">
          <span class="w-[26px]">${arrow ? ic(arrow, "size-6") : ""}</span>
          <span class="w-8 flex justify-center ${watch ? "text-[#2f86e8]" : ""}">${ic(watch || "watch", "w-6 h-7")}</span>
          <label ${id ? `for="${id}"` : ""} class="ml-[2px]">${name}</label>
        </div>
        <div class="flex items-center">${value}</div>
      </div>`;
    document.getElementById("effects").innerHTML =
      head("Grow Bounds") + `
      <div class="h-[118px] border-b-2 border-[#111]">
        <div class="h-8 grid grid-cols-[391px_1fr] items-center">
          <div class="flex items-center pl-10"><span class="w-[26px]">${ic("down", "size-6")}</span><span class="w-8 flex justify-center">${ic("watch", "w-6 h-7")}</span><label for="pixels" class="ml-[2px]">Pixels</label></div>
          ${blue("480")}
        </div>
        <div class="flex justify-between pl-[92px] pr-[25px] pt-1"><span>0</span><span>100</span></div>
        <input id="pixels" type="range" min="0" max="100" value="100" class="block ml-[92px] mt-[10px] w-[564px] h-7 appearance-none bg-transparent [&::-webkit-slider-runnable-track]:h-1 [&::-webkit-slider-runnable-track]:rounded [&::-webkit-slider-runnable-track]:bg-[#484848] [&::-webkit-slider-thumb]:appearance-none [&::-webkit-slider-thumb]:size-7 [&::-webkit-slider-thumb]:-mt-3 [&::-webkit-slider-thumb]:rounded-full [&::-webkit-slider-thumb]:border-4 [&::-webkit-slider-thumb]:border-[#b0b0b0] [&::-webkit-slider-thumb]:bg-[#1d1d1d] [&::-webkit-slider-thumb]:shadow-[0_0_0_8px_#1d1d1d]">
      </div>` +
      head("CC Bend It", true) +
      prop("Bend", blue("0,0"), "right", "watchon") +
      prop("Start", cross + `<span class="ml-3">${point("872,0", "176,0")}</span>`) +
      prop("End", cross + `<span class="ml-3">${point("936,0", "736,0")}</span>`) +
      prop("Render Prestart", drop("ec-prestart", "Bend"), "", "", "ec-prestart") +
      prop("Distort", drop("ec-distort", "Legal"), "", "", "ec-distort") +
      head("Solid Composite") +
      prop("Source Opacity", blue("100,0") + "%", "right") +
      prop("Color", `<button aria-label="Colour" class="w-[43px] h-[30px] border-2 border-[#2c2c2c] bg-white"></button><button aria-label="Eyedropper" class="ml-2 w-[43px] h-[30px] border-2 border-[#2c2c2c] bg-[#0e0e0e]">${ic("dropperflat", "w-[39px] h-5")}</button>`) +
      prop("Opacity", blue("0,0") + "%", "right") +
      prop("Blending Mode", drop("ec-mode", "Normal"), "", "", "ec-mode");

    // Timeline column header switches
    document.getElementById("switches").innerHTML = ["shy", "sun", "quality", "fx", "film", "blur", "adjust", "cube"]
      .map(s => s === "fx" ? `<span class="w-6 text-center italic text-[22px] font-['Open_Sans',sans-serif]">fx</span>` : ic(s, "size-6")).join("");

    // Timeline rows
    const reset = `<button class="text-[#4b93e3]">Reset</button>`;
    const pm = ic("plusminus", "w-[50px] h-6");
    const rows = [
      { name: "Compositing Options", indent: 109, icon: "down", value: pm, beam: 1 },
      { name: "Effect Opacity", indent: 174, icon: "watch", whip: 1, value: blue("100") + "%", beam: 1 },
      { name: "CC Bend It", indent: 75, icon: "down", value: reset, fx: 1, on: 1, beam: 1 },
      { name: "Bend", indent: 140, icon: "watchon", graph: 1, whip: 1, keys: 1, value: blue("0,0") },
      { name: "Start", indent: 140, icon: "watch", whip: 1, value: point("872,0", "176,0"), on: 1, beam: 1 },
      { name: "End", indent: 140, icon: "watch", whip: 1, value: point("936,0", "736,0"), beam: 1 },
      { name: "Render Prestart", indent: 140, icon: "watch", whip: 1, value: drop("tl-prestart", "Bend"), id: "tl-prestart", beam: 1 },
      { name: "Distort", indent: 140, icon: "watch", whip: 1, value: drop("tl-distort", "Legal"), id: "tl-distort", beam: 1 },
      { name: "Compositing Options", indent: 109, icon: "right", value: pm, beam: 1 },
      { name: "Solid Composite", indent: 75, icon: "right", value: reset, fx: 1, beam: 1 },
      { name: "Rotation", indent: 106, icon: "watchon", graph: 1, whip: 1, keys: 2, value: `${blue("0")}x${blue("+22,6")}°` },
    ];
    document.getElementById("layers-list").innerHTML = rows.map((r, i) => `
      <div class="${i ? "h-[34px]" : "h-8"} border-b-2 border-[#111] grid grid-cols-[564px_234px_103px_276px_1fr] items-center">
        <div class="flex items-center h-full" style="padding-left:${r.indent}px">
          <span class="w-6 ${r.icon === "watchon" ? "text-[#2f86e8]" : ""}">${ic(r.icon, r.icon.startsWith("watch") ? "w-6 h-7" : "size-6")}</span>
          ${r.graph ? ic("graph", "ml-[14px] size-6") : ""}
          <label ${r.id ? `for="${r.id}"` : ""} class="ml-[5px] pl-[6px] pt-[2px] flex-1 h-full flex items-center ${r.on ? "bg-[#494949]" : ""}">${r.name}</label>
        </div>
        <div class="pl-9">${r.whip ? ic("whip", "size-6") : ""}</div>
        <div class="flex items-center gap-3 pl-[15px]">${r.keys ? ic("kleft", "w-4 h-[18px]") + ic("kadd", "size-[18px]") + ic("kright", r.keys === 1 ? "w-4 h-[18px] text-[#666]" : "w-4 h-[18px]") : ""}</div>
        <div>${r.value}</div>
        <div class="pl-1 flex">${r.fx ? fx : ""}</div>
      </div>`).join("");

    // Ruler, ticks and keyframes. One second is 143px, time zero sits 15px in
    const at = (s) => Math.round(15 + s * 143.4);
    const secs = ["0:00s", "01s", "02s", "03s", "04s", "05s", "06s"];
    document.getElementById("ruler").innerHTML = secs.map((s, i) =>
      `<span class="absolute top-[2px] w-20 text-center" style="left:${at(i) - 40}px">${s}</span><span class="absolute bottom-0 w-[2px] h-[10px] bg-[#8a8a8a]" style="left:${at(i) - 1}px"></span>`).join("");
    document.getElementById("work").insertAdjacentHTML("beforeend", secs.map((s, i) =>
      i > 1 ? `<span class="absolute top-0 w-[2px] h-3 bg-[#8a8a8a]" style="left:${at(i) - 1}px"></span>` : "").join(""));

    const key = (id, x, cls) => `<svg class="absolute top-2 size-[18px] ${cls}" style="left:${x - 9}px"><use href="#${id}"/></svg>`;
    document.getElementById("tracks").insertAdjacentHTML("beforeend", rows.map((r, i) => `
      <div class="relative ${i ? "h-[34px]" : "h-8"} border-b-2 border-[#111]">
        ${r.beam ? `<svg class="absolute left-[62px] top-[5px] w-[14px] h-[22px]"><use href="#ibeam"/></svg>` : ""}
        ${r.name === "Bend" ? key("diamond", 39, "text-[#777]") : ""}
        ${r.name === "Rotation" ? key("hourglass", 15, "") + key("hourglass", 39, "") + key("hourglass", 159, "") + key("halfdiamond", 207, "") : ""}
      </div>`).join("") + `
      <div class="absolute z-20 left-[68px] -top-[42px] bottom-0 w-[2px] bg-[#4694ec]"></div>
      <svg class="absolute z-20 left-[58px] -top-[70px] w-[22px] h-[26px]"><use href="#playhead"/></svg>`);

    // Properties panel
    const field = (v, w) => `<span class="h-full flex items-center pl-1 pt-1 border-b-2 border-[#666] ${w || "w-[79px]"}">${v}</span>`;
    const line = (name, value, opt = {}) => `
      <div class="${opt.tall ? "h-[50px] items-end" : "h-10 items-center"} grid grid-cols-[96px_138px_44px_1fr]">
        <span class="pl-[25px]">${opt.tall ? "" : ic("watch", "w-6 h-7")}</span>
        <label ${opt.id ? `for="${opt.id}"` : ""} class="whitespace-nowrap ${opt.tall ? "pb-2" : "pt-[6px]"}">${name}</label>
        <span class="text-[#4b93e3]">${opt.link ? ic("chain", "w-7 h-[18px]") : ""}</span>
        <div class="flex items-center h-full gap-[22px]">${value}</div>
      </div>`;
    const title = (name) => `<div class="h-[63px] border-t-2 border-black grid grid-cols-[282px_1fr] items-center"><h2 class="font-bold">${name}</h2><button class="text-left text-[#4b93e3]">Reset</button></div>`;
    const pick = (swatch, dim, id, value) => `
      <div class="flex items-center w-full">${swatch}${ic("dropper", dim ? "ml-[13px] w-7 h-8 text-[#777]" : "ml-[13px] w-7 h-8")}
        <div class="relative ml-[14px] w-[182px]"><select id="${id}" class="block appearance-none w-full h-[38px] rounded-lg border-2 border-[#2f2f2f] bg-[#0e0e0e] pl-[14px]"><option>${value}</option></select>${ic("down", "absolute right-[14px] top-[6px] size-6 pointer-events-none")}</div>
      </div>`;
    const three = (paths) => `<div class="flex self-end">` + paths.map((d, i) =>
      `<button aria-label="Option ${i + 1}" class="w-12 h-12 mr-[2px] rounded-lg flex items-center justify-center ${i ? "" : "bg-[#494949] text-[#ddd]"}"><svg class="size-5" viewBox="0 0 20 20"><path fill="currentColor" fill-rule="evenodd" d="${d}"/></svg></button>`).join("") + `</div>`;
    document.getElementById("properties").innerHTML =
      title("Shape Properties") +
      line("Size", field(blue("61,4")) + field(blue("563,9")), { link: 1 }) +
      line("Roundness", field(blue("0"))) +
      line("Stroke Color", pick(`<button aria-label="Stroke" class="w-[33px] h-[33px]"><svg class="size-[33px]" viewBox="0 0 33 33"><path fill="#000" stroke="#8a8a8a" stroke-width="3" d="M2 2h29v29H2z"/><path stroke="#ff7b66" stroke-width="4" d="M3 30 30 3"/></svg></button>`, 1, "stroke-type", "None"), { id: "stroke-type" }) +
      line("Stroke Width", field(blue("30"))) +
      line("Line Cap", three(["M7 0h13v8h-7V6H4v8h9v-2h7v8H7v-4H2V4h5z", "M10 0h10v8h-7V6H8v8h5v-2h7v8H10C-3 20-3 0 10 0z", "M0 0h20v8h-6V6H7v8h7v-2h6v8H0z"]), { tall: 1 }) +
      line("Line Join", three(["M0 0h8v12h12v8H0z", "M0 0h8v12h12v8H8q-8 0-8-8z", "M0 0h8v12h12v8H9l-9-9z"]), { tall: 1 }) +
      line("Fill Color", pick(`<button aria-label="Fill" class="w-[33px] h-[33px] border-2 border-[#e0a5a0] bg-[#ff4e4e]"></button>`, 0, "fill-type", "Solid Color"), { id: "fill-type" }) +
      `<div class="h-[13px]"></div>` +
      title("Shape Transform") +
      line("Anchor Point", field(blue("0")) + field(blue("0"))) +
      line("Position", field(blue("-661,3")) + field(blue("-78,1"))) +
      line("Scale", field(blue("100") + "%") + field(blue("100") + "%"), { link: 1 }) +
      line("Skew", field(blue("0"))) +
      line("Skew Axis", field(`${blue("0")}x${blue("+0")}°`, "w-[106px]")) +
      line("Rotation", field(`${blue("0")}x${blue("+0")}°`, "w-[106px]")) +
      line("Opacity", field(blue("100") + "%"));
  </script>
</body>

</html>
